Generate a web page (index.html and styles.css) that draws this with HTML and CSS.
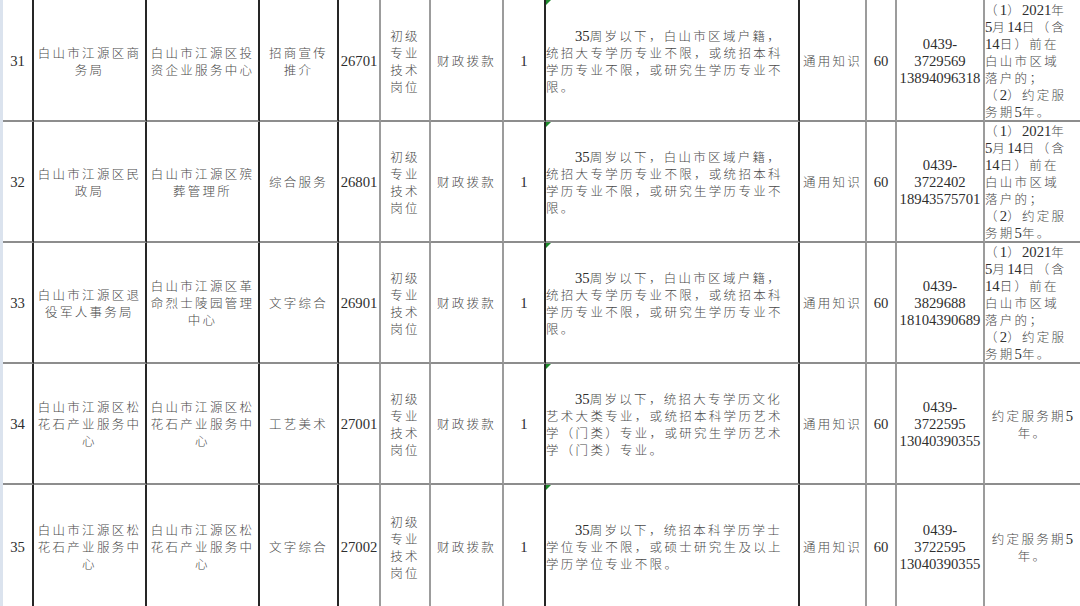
FILE: index.html
```html
<!DOCTYPE html>
<html lang="zh-CN">
<head>
<meta charset="utf-8">
<title>岗位表</title>
<link rel="stylesheet" href="styles.css">
</head>
<body>
<div class="sheet">
<table class="grid">
<colgroup>
<col class="w-no"><col class="w-unit"><col class="w-unit"><col class="w-post"><col class="w-code"><col class="w-type"><col class="w-fund"><col class="w-cnt"><col class="w-req"><col class="w-test"><col class="w-score"><col class="w-tel"><col class="w-note">
</colgroup>
<tbody>
<tr>
<td class="c bk"><span class="n">31</span></td>
<td class="c bk">白山市江源区商<br>务局</td>
<td class="c bk">白山市江源区投<br>资企业服务中心</td>
<td class="c bk">招商宣传<br>推介</td>
<td class="c gy"><span class="n">26701</span></td>
<td class="c gy">初级<br>专业<br>技术<br>岗位</td>
<td class="c gy">财政拨款</td>
<td class="c bk"><span class="n">1</span></td>
<td class="req bk"><span class="ind"><span class="n">35</span>周岁以下，白山市区域户籍，</span><br>统招大专学历专业不限，或统招本科<br>学历专业不限，或研究生学历专业不<br>限。</td>
<td class="c gy">通用知识</td>
<td class="c gy"><span class="n">60</span></td>
<td class="c gy"><span class="n">0439-<br>3729569<br>13894096318</span></td>
<td class="l">（<span class="n">1</span>）<span class="n">2021</span>年<br><span class="n">5</span>月<span class="n">14</span>日（含<br><span class="n">14</span>日）前在<br>白山市区域<br>落户的；<br>（<span class="n">2</span>）约定服<br>务期<span class="n">5</span>年。</td>
</tr>
<tr>
<td class="c bk"><span class="n">32</span></td>
<td class="c bk">白山市江源区民<br>政局</td>
<td class="c bk">白山市江源区殡<br>葬管理所</td>
<td class="c bk">综合服务</td>
<td class="c gy"><span class="n">26801</span></td>
<td class="c gy">初级<br>专业<br>技术<br>岗位</td>
<td class="c gy">财政拨款</td>
<td class="c bk"><span class="n">1</span></td>
<td class="req bk"><span class="ind"><span class="n">35</span>周岁以下，白山市区域户籍，</span><br>统招大专学历专业不限，或统招本科<br>学历专业不限，或研究生学历专业不<br>限。</td>
<td class="c gy">通用知识</td>
<td class="c gy"><span class="n">60</span></td>
<td class="c gy"><span class="n">0439-<br>3722402<br>18943575701</span></td>
<td class="l">（<span class="n">1</span>）<span class="n">2021</span>年<br><span class="n">5</span>月<span class="n">14</span>日（含<br><span class="n">14</span>日）前在<br>白山市区域<br>落户的；<br>（<span class="n">2</span>）约定服<br>务期<span class="n">5</span>年。</td>
</tr>
<tr>
<td class="c bk"><span class="n">33</span></td>
<td class="c bk">白山市江源区退<br>役军人事务局</td>
<td class="c bk">白山市江源区革<br>命烈士陵园管理<br>中心</td>
<td class="c bk">文字综合</td>
<td class="c gy"><span class="n">26901</span></td>
<td class="c gy">初级<br>专业<br>技术<br>岗位</td>
<td class="c gy">财政拨款</td>
<td class="c bk"><span class="n">1</span></td>
<td class="req bk"><span class="ind"><span class="n">35</span>周岁以下，白山市区域户籍，</span><br>统招大专学历专业不限，或统招本科<br>学历专业不限，或研究生学历专业不<br>限。</td>
<td class="c gy">通用知识</td>
<td class="c gy"><span class="n">60</span></td>
<td class="c gy"><span class="n">0439-<br>3829688<br>18104390689</span></td>
<td class="l">（<span class="n">1</span>）<span class="n">2021</span>年<br><span class="n">5</span>月<span class="n">14</span>日（含<br><span class="n">14</span>日）前在<br>白山市区域<br>落户的；<br>（<span class="n">2</span>）约定服<br>务期<span class="n">5</span>年。</td>
</tr>
<tr>
<td class="c bk"><span class="n">34</span></td>
<td class="c bk">白山市江源区松<br>花石产业服务中<br>心</td>
<td class="c bk">白山市江源区松<br>花石产业服务中<br>心</td>
<td class="c bk">工艺美术</td>
<td class="c gy"><span class="n">27001</span></td>
<td class="c gy">初级<br>专业<br>技术<br>岗位</td>
<td class="c gy">财政拨款</td>
<td class="c bk"><span class="n">1</span></td>
<td class="req bk"><span class="ind"><span class="n">35</span>周岁以下，统招大专学历文化</span><br>艺术大类专业，或统招本科学历艺术<br>学（门类）专业，或研究生学历艺术<br>学（门类）专业。</td>
<td class="c gy">通用知识</td>
<td class="c gy"><span class="n">60</span></td>
<td class="c gy"><span class="n">0439-<br>3722595<br>13040390355</span></td>
<td class="c">约定服务期<span class="n">5</span><br>年。</td>
</tr>
<tr>
<td class="c bk"><span class="n">35</span></td>
<td class="c bk">白山市江源区松<br>花石产业服务中<br>心</td>
<td class="c bk">白山市江源区松<br>花石产业服务中<br>心</td>
<td class="c bk">文字综合</td>
<td class="c gy"><span class="n">27002</span></td>
<td class="c gy">初级<br>专业<br>技术<br>岗位</td>
<td class="c gy">财政拨款</td>
<td class="c bk"><span class="n">1</span></td>
<td class="req bk"><span class="ind"><span class="n">35</span>周岁以下，统招本科学历学士</span><br>学位专业不限，或硕士研究生及以上<br>学历学位专业不限。</td>
<td class="c gy">通用知识</td>
<td class="c gy"><span class="n">60</span></td>
<td class="c gy"><span class="n">0439-<br>3722595<br>13040390355</span></td>
<td class="c">约定服务期<span class="n">5</span><br>年。</td>
</tr>
</tbody>
</table>
</div>
</body>
</html>
```

FILE: styles.css
```css
html, body {
  margin: 0;
  padding: 0;
  background: #ffffff;
  overflow: hidden;
}

.sheet {
  width: 1080px;
  height: 606px;
  box-sizing: border-box;
  border-left: 3px solid #dbe3ee;
  overflow: hidden;
}

.grid {
  table-layout: fixed;
  border-collapse: separate;
  border-spacing: 0;
  width: 1077px;
  font-family: "Noto Sans CJK SC", "Liberation Serif", serif;
  font-size: 12.5px;
  font-weight: 300;
  letter-spacing: 2.3px;
  color: #4a4a4a;
  line-height: 17px;
}

.w-no { width: 31px; }
.w-unit { width: 113px; }
.w-post { width: 79px; }
.w-code { width: 42px; }
.w-type { width: 50px; }
.w-fund { width: 73px; }
.w-cnt { width: 42px; }
.w-req { width: 254px; }
.w-test { width: 67px; }
.w-score { width: 30px; }
.w-tel { width: 88px; }
.w-note { width: 95px; }

.grid tr {
  height: 121px;
}

.grid td {
  box-sizing: border-box;
  height: 121px;
  padding: 0;
  vertical-align: middle;
  white-space: nowrap;
  overflow: hidden;
  border-bottom: 2px solid #8d8d8d;
  position: relative;
}

.grid tr:first-child,
.grid tr:first-child td {
  height: 122px;
}

.grid tr:first-child td {
  padding-top: 1px;
}

.grid tr:last-child,
.grid tr:last-child td {
  height: 125px;
}

.grid td.bk {
  border-right: 2px solid #262626;
}

.grid td.gy {
  border-right: 2px solid #9c9c9c;
}

.c {
  text-align: center;
}

.l {
  text-align: left;
  padding-left: 1px;
}

.req {
  text-align: left;
  padding-left: 3px;
}

.req::before {
  content: "";
  position: absolute;
  left: 0;
  top: 0;
  border-top: 5px solid #1d8a2c;
  border-right: 5px solid transparent;
}

.ind {
  padding-left: 29px;
}

.n {
  font-family: "Liberation Serif", serif;
  font-size: 14.7px;
  font-weight: 400;
  letter-spacing: 0;
  color: #2e2e2e;
  line-height: 0;
}
```
